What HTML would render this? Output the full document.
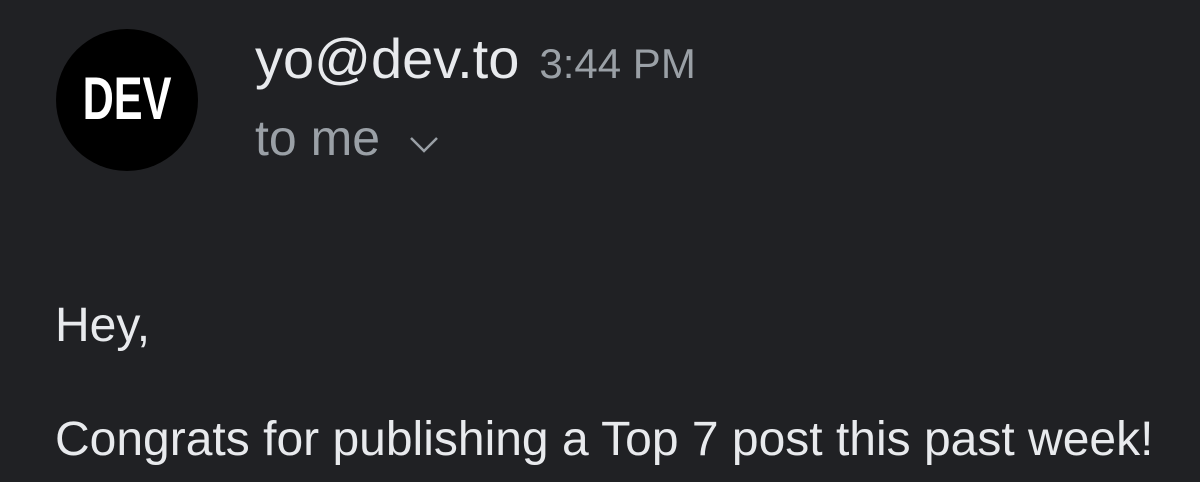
<!DOCTYPE html>
<html><head><meta charset="utf-8"><style>
html,body{margin:0;padding:0;width:1200px;height:482px;background:#202124;overflow:hidden;font-family:"Liberation Sans",sans-serif;}
.c{position:absolute;left:56px;top:29px;width:142px;height:142px;border-radius:50%;background:#000;}
.c span{position:absolute;left:-20px;right:-20px;top:70px;text-align:center;color:#fff;font-weight:bold;font-size:60px;transform:translateY(-50%) scaleX(0.72);line-height:60px;}
.t{position:absolute;white-space:nowrap;}
</style></head><body>
<div class="c"><span>DEV</span></div>
<div class="t" style="left:255px;top:31px;font-size:56px;color:#e8eaed;line-height:56px;">yo@dev.to<span style="font-size:42px;color:#9aa0a6;margin-left:20px;">3:44 PM</span></div>
<div class="t" style="left:255px;top:113px;font-size:50px;color:#9aa0a6;line-height:50px;">to me</div>
<svg class="t" style="left:407px;top:132px" width="34" height="24"><path d="M4 6 L17 19 L30 6" stroke="#9aa0a6" stroke-width="2.5" fill="none"/></svg>
<div class="t" style="left:55px;top:302px;font-size:48px;color:#e8eaed;line-height:48px;">Hey,</div>
<div class="t" style="left:55px;top:416px;font-size:48px;color:#e8eaed;line-height:48px;">Congrats for publishing a Top 7 post this past week!</div>
</body></html>
